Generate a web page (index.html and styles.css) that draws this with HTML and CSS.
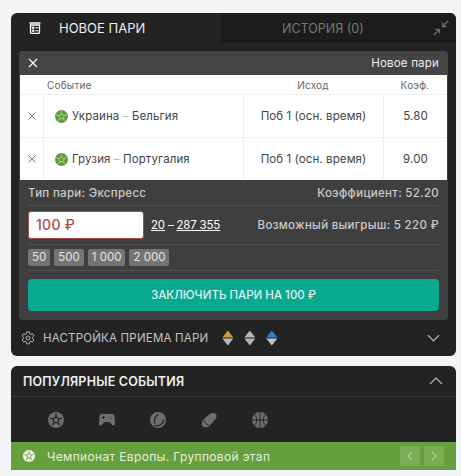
FILE: index.html
```html
<!DOCTYPE html>
<html lang="en">
<head>
    <meta charset="UTF-8">
    <meta name="viewport" content="width=device-width, initial-scale=1.0">
    <title>Новое пари</title>
    <link rel="stylesheet" href="styles.css">
</head>
<body>
    <svg class="defs" width="0" height="0">
        <symbol id="ball" viewBox="0 0 16 16">
            <circle cx="8" cy="8" r="8" fill="currentColor"/>
            <path class="ball-seams" d="M8 4.800L11 7 9.900 10.600H6.100L5 7zM8 4.800V1.500M11 7l3.200-1M9.900 10.600l2 2.700M6.100 10.600l-2 2.700M5 7L1.800 6"/>
        </symbol>
    </svg>

    <section class="panel">
        <div class="tabs">
            <div class="tab tab-active">
                <svg class="tab-icon" viewBox="0 0 12 12" width="12" height="12">
                    <path d="M1.500 3h9v7.500a.8.8 0 0 1-.8.800H2.300a.8.8 0 0 1-.8-.8zM.5 1h11" fill="none" stroke="#fff" stroke-width="1.300"/>
                    <path d="M3.300 5h1.700v1.700H3.300zM3.300 8.200h1.700v1.200H3.300zM6.300 5.800h3M6.300 8.800h3" fill="none" stroke="#fff" stroke-width="1"/>
                </svg>
                <span>НОВОЕ ПАРИ</span>
            </div>
            <div class="tab tab-history">
                <span>ИСТОРИЯ (0)</span>
                <svg class="collapse-icon" viewBox="0 0 16 16" width="16" height="16">
                    <path d="M15 1L9.500 6.500M9.500 2.500v4h4" fill="none" stroke="#6c6c6c" stroke-width="1.300"/>
                    <path d="M1 15l5.500-5.500M2.500 9.500h4v4" fill="none" stroke="#6c6c6c" stroke-width="1.300"/>
                </svg>
            </div>
        </div>

        <div class="slip">
            <div class="slip-top">
                <svg viewBox="0 0 10 10" width="10" height="10"><path d="M1 1l8 8M9 1l-8 8" stroke="#fff" stroke-width="1.100"/></svg>
                <span>Новое пари</span>
            </div>

            <div class="bets">
                <div class="bets-row bets-head">
                    <div></div>
                    <div class="cell-event">Событие</div>
                    <div class="cell-center">Исход</div>
                    <div class="cell-center">Коэф.</div>
                </div>
                <div class="bets-row bet">
                    <div class="cell-center cell-x"><svg viewBox="0 0 8 8" width="8" height="8"><path d="M.5.500l7 7M7.500.500l-7 7" stroke="#777" stroke-width="1"/></svg></div>
                    <div class="cell-event"><svg class="ball-green" width="13" height="13"><use href="#ball"/></svg><span>Украина <i>–</i> Бельгия</span></div>
                    <div class="cell-center">Поб 1 (осн. время)</div>
                    <div class="cell-center">5.80</div>
                </div>
                <div class="bets-row bet">
                    <div class="cell-center cell-x"><svg viewBox="0 0 8 8" width="8" height="8"><path d="M.5.500l7 7M7.500.500l-7 7" stroke="#777" stroke-width="1"/></svg></div>
                    <div class="cell-event"><svg class="ball-green" width="13" height="13"><use href="#ball"/></svg><span>Грузия <i>–</i> Португалия</span></div>
                    <div class="cell-center">Поб 1 (осн. время)</div>
                    <div class="cell-center">9.00</div>
                </div>
            </div>

            <div class="summary">
                <div class="line line-type">
                    <span>Тип пари: Экспресс</span>
                    <span>Коэффициент: 52.20</span>
                </div>
                <div class="line line-stake">
                    <div class="stake-left">
                        <div class="stake-input">100 ₽</div>
                        <div class="limits"><u>20</u> – <u>287 355</u></div>
                    </div>
                    <span>Возможный выигрыш: 5 220 ₽</span>
                </div>
                <div class="line line-chips">
                    <span class="chip">50</span>
                    <span class="chip">500</span>
                    <span class="chip">1 000</span>
                    <span class="chip">2 000</span>
                </div>
                <button class="place-bet">ЗАКЛЮЧИТЬ ПАРИ НА 100 ₽</button>
            </div>
        </div>

        <div class="settings">
            <svg viewBox="0 0 16 16" width="14" height="14">
                <path d="M6.600 1h2.800l.4 2 1.500.9 2-.7 1.400 2.400-1.500 1.400v1.700l1.500 1.400-1.400 2.400-2-.7-1.500.9-.4 2H6.600l-.4-2-1.500-.9-2 .7-1.400-2.400 1.500-1.400V7.200L1.300 5.800l1.400-2.400 2 .7 1.500-.9z" fill="none" stroke="#bbb" stroke-width="1.100"/>
                <circle cx="8" cy="8" r="2.300" fill="none" stroke="#bbb" stroke-width="1.100"/>
            </svg>
            <span class="settings-label">НАСТРОЙКА ПРИЕМА ПАРИ</span>
            <span class="odds-arrows arrows-orange"></span>
            <span class="odds-arrows arrows-grey"></span>
            <span class="odds-arrows arrows-blue"></span>
            <svg class="chevron" viewBox="0 0 14 8" width="13" height="8"><path d="M1 1l6 6 6-6" fill="none" stroke="#aaa" stroke-width="1.400"/></svg>
        </div>
    </section>

    <section class="panel panel-popular">
        <div class="popular-head">
            <span>ПОПУЛЯРНЫЕ СОБЫТИЯ</span>
            <svg viewBox="0 0 14 8" width="14" height="8"><path d="M1 7l6-6 6 6" fill="none" stroke="#aaa" stroke-width="1.400"/></svg>
        </div>
        <div class="sports">
            <svg class="sport" width="16" height="16"><use href="#ball"/></svg>
            <svg class="sport" viewBox="0 0 16 14" width="16" height="14"><path d="M3 1h10c1.500 0 2.300.8 2.500 2.200l.5 7.500c.1 1.600-1.800 2.300-2.800 1.200L10.500 9h-5l-2.700 2.900C1.800 13-.1 12.300 0 10.700l.5-7.500C.7 1.800 1.500 1 3 1z" fill="currentColor"/><path d="M3 4.500h3M4.500 3v3M10.500 3.800h.8M12 5.500h.8" stroke="#222" stroke-width="1"/></svg>
            <svg class="sport" viewBox="0 0 16 16" width="16" height="16"><circle cx="8" cy="8" r="8" fill="currentColor"/><path d="M8.500 2.500C5 4 3.500 8 5 11.500M4.500 13.500C8.500 15 13.500 12 14 7.500" fill="none" stroke="#222" stroke-width="1.300"/></svg>
            <svg class="sport" viewBox="0 0 16 16" width="16" height="16"><path d="M2.500 7.500L8 2.500c2.500-1.800 5.500-2 6.800-.8s.8 3.800-.8 6L9 13.500c-2.500 2-6 2.300-7.300 1S.5 9.500 2.500 7.500z" fill="currentColor"/><path d="M3 8c.4 2.800 2 4.500 4.500 5" fill="none" stroke="#222" stroke-width=".9" transform="rotate(-6 5 10)"/></svg>
            <svg class="sport" viewBox="0 0 16 16" width="16" height="16"><circle cx="8" cy="8" r="8" fill="currentColor"/><path d="M8 0v16M0 8h16M2.500 2.500c3 3 3 8 0 11M13.500 2.500c-3 3-3 8 0 11" fill="none" stroke="#222" stroke-width="1"/></svg>
        </div>
        <div class="league">
            <svg class="ball-white" width="12" height="12"><use href="#ball"/></svg>
            <span class="league-name">Чемпионат Европы. Групповой этап</span>
            <span class="league-nav"><svg viewBox="0 0 6 10" width="6" height="10"><path d="M5 1L1 5l4 4" fill="none" stroke="#a9cc8e" stroke-width="1.300"/></svg></span>
            <span class="league-nav"><svg viewBox="0 0 6 10" width="6" height="10"><path d="M1 1l4 4-4 4" fill="none" stroke="#a9cc8e" stroke-width="1.300"/></svg></span>
        </div>
    </section>
</body>
</html>
```

FILE: styles.css
```css
* {
    box-sizing: border-box;
}
html, body {
    height: 476px;
    overflow: hidden;
}
body {
    margin: 0;
    padding: 13px 5px 0 11px;
    background-color: #f3f5f7;
    font-family: Inter, "Noto Sans", sans-serif;
    font-size: 11.5px;
    color: #444;
}
.defs {
    position: absolute;
}
.ball-seams {
    fill: none;
    stroke: var(--seam);
    stroke-width: 1.300;
}
.panel {
    background-color: #232323;
    border-radius: 6px;
    overflow: hidden;
}

/* tabs */
.tabs {
    display: flex;
    height: 30px;
}
.tab {
    display: flex;
    align-items: center;
    font-size: 13px;
}
.tab-active {
    width: 208px;
    padding-left: 18px;
    gap: 18px;
    color: #eee;
}
.tab-icon {
    flex: none;
}
.tab-history {
    flex: 1;
    margin-left: 2px;
    background-color: #1c1c1c;
    color: #777;
    font-size: 12.5px;
    padding-left: 61px;
    padding-right: 7px;
    justify-content: space-between;
}

/* bet slip */
.slip {
    margin: 8px 8px 0;
    background-color: #3f3f3f;
    border-radius: 4px;
    overflow: hidden;
}
.slip-top {
    height: 24px;
    padding: 0 9px 0 9px;
    display: flex;
    align-items: center;
    justify-content: space-between;
    background-color: #444;
    color: #eee;
    font-size: 11.5px;
    letter-spacing: .2px;
}
.bets {
    margin: 0 1px;
    background-color: #fff;
    letter-spacing: .1px;
}
.bets-row {
    display: grid;
    grid-template-columns: 23px 200px 140px 1fr;
}
.bets-head {
    height: 20px;
    font-size: 10px;
    color: #666;
    align-items: center;
    border-bottom: 1px solid #efefef;
    letter-spacing: .2px;
}
.bet {
    height: 43px;
    align-items: stretch;
    border-bottom: 1px solid #efefef;
}
.bet:last-child {
    border-bottom: none;
    height: 42px;
}
.bet > div {
    display: flex;
    align-items: center;
    border-left: 1px solid #efefef;
}
.bet > .cell-x {
    border-left: none;
}
.cell-center {
    justify-content: center;
    text-align: center;
}
.cell-event {
    gap: 4px;
    padding-left: 4px;
}
.bet .cell-event {
    padding-left: 11px;
}
.cell-event i {
    font-style: normal;
    color: #bbb;
}
.ball-green {
    color: #5f9c3c;
    --seam: #a5c98d;
    flex: none;
}

/* summary under the table */
.summary {
    padding: 0 9px 9px;
    color: #ccc;
}
.line {
    display: flex;
    align-items: center;
    justify-content: space-between;
    border-bottom: 1px solid #505050;
    font-weight: 500;
    letter-spacing: .3px;
}
.line-type {
    height: 26px;
}
.line-stake {
    height: 39px;
}
.stake-left {
    display: flex;
    align-items: center;
    gap: 7px;
}
.stake-input {
    width: 116px;
    height: 28px;
    line-height: 26px;
    padding-left: 7px;
    background-color: #fff;
    border: 1px solid #a84b4b;
    border-radius: 3px;
    color: #b04a4a;
    font-size: 14px;
}
.limits {
    color: #fff;
    font-weight: 400;
    letter-spacing: -.2px;
}
.line-chips {
    height: 26px;
    justify-content: flex-start;
    gap: 4px;
    letter-spacing: 0;
    font-weight: 400;
}
.chip {
    height: 17px;
    line-height: 17px;
    padding: 0 4px;
    background-color: #747474;
    border-radius: 2px;
    color: #e4e4e4;
}
.place-bet {
    display: block;
    width: 100%;
    height: 32px;
    margin-top: 8px;
    border: none;
    border-radius: 4px;
    background-color: #09a98f;
    color: #dff3ef;
    font-family: inherit;
    font-size: 11.5px;
    font-weight: 500;
}

/* settings row */
.settings {
    height: 36px;
    display: flex;
    align-items: center;
    padding: 0 16px 0 10px;
    color: #c4c4c4;
}
.settings-label {
    margin-left: 8px;
    margin-right: 14px;
    letter-spacing: .2px;
}
.odds-arrows {
    width: 11px;
    height: 15px;
    margin-right: 11px;
    clip-path: polygon(50% 0, 100% 46%, 50% 46%, 50% 54%, 100% 54%, 50% 100%, 0 54%, 50% 54%, 50% 46%, 0 46%);
}
.arrows-orange {
    background: linear-gradient(#d99a34 50%, #b9b9b9 50%);
}
.arrows-grey {
    background: #b5b5b5;
}
.arrows-blue {
    background: linear-gradient(#2f80c8 50%, #b9c4cc 50%);
}
.chevron {
    margin-left: auto;
}

/* popular events */
.panel-popular {
    margin-top: 10px;
    border-radius: 6px 6px 0 0;
}
.popular-head {
    height: 31px;
    padding: 0 13px 0 12px;
    display: flex;
    align-items: center;
    justify-content: space-between;
    border-bottom: 1px solid #363636;
    color: #eee;
    font-size: 12.5px;
    font-weight: 600;
    letter-spacing: .2px;
}
.sports {
    height: 45px;
    display: flex;
    align-items: center;
    padding-left: 37px;
    gap: 35px;
}
.sport {
    color: #6e6e6e;
    --seam: #232323;
}
.league {
    height: 28px;
    display: flex;
    align-items: center;
    padding: 0 8px 0 12px;
    background-color: #669f3e;
    color: #e3efd9;
}
.ball-white {
    color: #f0f5ec;
    --seam: #669f3e;
    flex: none;
}
.league-name {
    flex: 1;
    margin-left: 12px;
    font-size: 12px;
    letter-spacing: .35px;
}
.league-nav {
    width: 20px;
    height: 20px;
    margin-right: 4px;
    display: flex;
    align-items: center;
    justify-content: center;
    background-color: #7aae55;
}
```
